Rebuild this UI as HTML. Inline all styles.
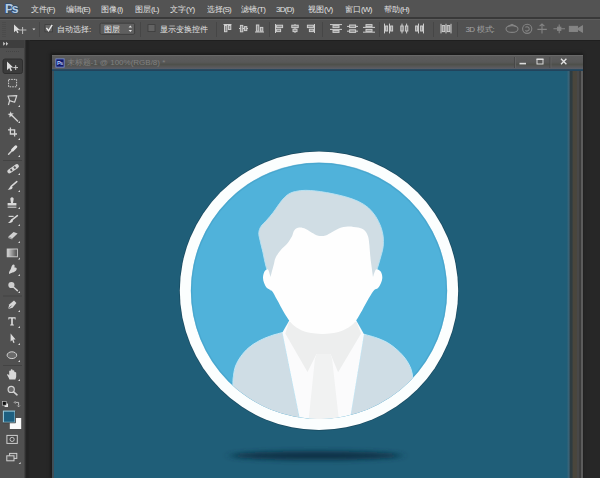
<!DOCTYPE html>
<html lang="zh">
<head>
<meta charset="utf-8">
<title>Photoshop</title>
<style>
html,body{margin:0;padding:0;}
body{width:600px;height:478px;overflow:hidden;background:#272727;position:relative;font-family:"Liberation Sans",sans-serif;font-size:9px;color:#d2d2d2;}
.abs{position:absolute;}
#menubar{left:0;top:0;width:600px;height:17.5px;background:#535353;}
#divider1{left:0;top:17.3px;width:600px;height:1.7px;background:#393939;}
#divider2{left:0;top:19px;width:600px;height:1px;background:#5d5d5d;}
#optbar{left:0;top:20px;width:600px;height:19.5px;background:#515151;}
#optshadow{left:0;top:39.5px;width:600px;height:1px;background:#1f1f1f;}
.mi{position:absolute;top:5px;height:10px;line-height:10px;white-space:nowrap;font-size:8px;color:#e2e2e2;}
.mi i,.ot i,.tt i{font-style:normal;letter-spacing:-0.7px;}
b.c{display:inline-block;font-weight:normal;white-space:nowrap;overflow:hidden;vertical-align:top;height:10px;}
.ot{position:absolute;top:25px;height:10px;line-height:10px;white-space:nowrap;font-size:8px;color:#e2e2e2;}
#toolbar{left:0;top:40px;width:25px;height:438px;background:#505050;}
#toolhead{left:0;top:40px;width:25px;height:7.5px;background:#3e3e3e;}
#toolborder{left:24px;top:40px;width:6px;height:438px;background:linear-gradient(90deg,#4c4c4c 0,#333 1.2px,#222 2.6px,#222 4px,#272727 6px);}
#win{left:52px;top:55px;width:531.3px;height:423px;background:#404e56;box-shadow:-1px -1px 2.5px 1px #1b1b1b;}
#titlebar{left:52px;top:55px;width:531px;height:15.5px;background:linear-gradient(#6e6e6e 0,#5b5b5b 1.5px,#585858 7px,#4e504b 9.5px,#565656 11.5px,#5a5e68 14px,#2a4a60 14.5px,#22445c 15.5px);}
#canvas{left:54px;top:70.5px;width:514.5px;height:407.5px;background:#1f5e78;}
#vscroll{left:567px;top:70.5px;width:16.3px;height:407.5px;background:linear-gradient(90deg,#1f5e78 0,#386378 1.2px,#386378 2.2px,#2e3c41 3px,#2e3c41 5px,#4a463c 6.2px,#4a463c 9.4px,#484848 10.2px,#484848 12px,#3c3c3c 12.6px,#3c3c3c 13.5px,#5c5c5c 14px,#5c5c5c 16.3px);}
</style>
</head>
<body>
<div id="menubar" class="abs"></div>
<div id="divider1" class="abs"></div>
<div id="divider2" class="abs"></div>
<div id="optbar" class="abs"></div>
<div id="optshadow" class="abs"></div>

<!-- menu -->
<svg class="abs" style="left:0;top:0" width="26" height="17" viewBox="0 0 26 17"><text x="5" y="13" font-family="Liberation Sans, sans-serif" font-weight="bold" font-size="12.8" fill="#b4cbe4" stroke="#2e4d70" stroke-width="1.6" paint-order="stroke" textLength="13.6">Ps</text></svg>
<span class="mi" style="left:30.5px"><b class="c" style="width:16px">文件</b><i>(F)</i></span>
<span class="mi" style="left:65.5px"><b class="c" style="width:16px">编辑</b><i>(E)</i></span>
<span class="mi" style="left:101px"><b class="c" style="width:16px">图像</b><i>(I)</i></span>
<span class="mi" style="left:135px"><b class="c" style="width:16px">图层</b><i>(L)</i></span>
<span class="mi" style="left:170px"><b class="c" style="width:16px">文字</b><i>(Y)</i></span>
<span class="mi" style="left:206.5px"><b class="c" style="width:16px">选择</b><i>(S)</i></span>
<span class="mi" style="left:241px"><b class="c" style="width:16px">滤镜</b><i>(T)</i></span>
<span class="mi" style="left:276px"><i>3D(D)</i></span>
<span class="mi" style="left:308px"><b class="c" style="width:16px">视图</b><i>(V)</i></span>
<span class="mi" style="left:345px"><b class="c" style="width:16px">窗口</b><i>(W)</i></span>
<span class="mi" style="left:384px"><b class="c" style="width:16px">帮助</b><i>(H)</i></span>

<!-- options bar -->
<svg class="abs" style="left:0;top:19px" width="600" height="21" viewBox="0 19 600 21" fill="none">
  <!-- grip -->
  <path d="M3 22V37M5 22V37" stroke="#464646" stroke-width="1" stroke-dasharray="1 1"/>
  <!-- move tool icon -->
  <path d="M14 24.6V32.2L16 30.4L17.4 33.2L18.6 32.6L17.3 29.9H19.9Z" fill="#dcdcdc"/>
  <path d="M18.6 30H26.4M22.6 27V34" stroke="#bdbdbd" stroke-width="1"/>
  <path d="M32.4 28.4H35.4L33.9 30.2Z" fill="#d8d8d8"/>
  <path d="M39.5 22V37" stroke="#464646" stroke-width="1"/>
  <!-- checkbox checked -->
  <rect x="45" y="24.6" width="7.4" height="7.2" fill="#666" stroke="#3d3d3d" stroke-width="0.8"/>
  <path d="M46.4 27.8L48.5 30.8L52.2 24.8" stroke="#ececec" stroke-width="1.4"/>
  <!-- dropdown -->
  <rect x="100" y="23.2" width="34.6" height="11.2" rx="1.5" fill="#5f5f5f" stroke="#3c3c3c" stroke-width="0.9"/>
  <path d="M128.6 27.6H132L130.3 25.6ZM128.6 30H132L130.3 32Z" fill="#e4e4e4"/>
  <path d="M140.5 22V37" stroke="#464646" stroke-width="1"/>
  <!-- checkbox unchecked -->
  <rect x="148" y="24.6" width="7" height="7" fill="#636363" stroke="#3d3d3d" stroke-width="0.8"/>
  <path d="M216.5 22V37" stroke="#464646" stroke-width="1"/>
  <!-- align icons -->
  <g stroke="#cdcdcd" stroke-width="1" fill="#8a8a8a">
    <path d="M223.5 24.5H231.5"/><rect x="224.5" y="25.5" width="2.4" height="6.2"/><rect x="228.4" y="25.5" width="2.4" height="4"/>
    <path d="M239 28.5H248"/><rect x="240.4" y="25.4" width="2.4" height="6.4"/><rect x="244.4" y="26.6" width="2.4" height="4"/>
    <path d="M255 32H264"/><rect x="256.4" y="25" width="2.4" height="6.2"/><rect x="260.4" y="27.4" width="2.4" height="3.8"/>
    <path d="M275.5 24V33"/><rect x="276.6" y="25.2" width="6" height="2.4"/><rect x="276.6" y="29.2" width="4" height="2.4"/>
    <path d="M295 24V33"/><rect x="291.8" y="25.2" width="6.4" height="2.4"/><rect x="293" y="29.2" width="4" height="2.4"/>
    <path d="M314.5 24V33"/><rect x="307.4" y="25.2" width="6" height="2.4"/><rect x="309.4" y="29.2" width="4" height="2.4"/>
    <path d="M330 24.6H342M330 29.4H342"/><rect x="333" y="25.6" width="6" height="2"/><rect x="333" y="30.4" width="6" height="2"/>
    <path d="M347 26.4H358M347 31.2H358"/><rect x="349.6" y="25" width="6" height="2.6"/><rect x="349.6" y="29.8" width="6" height="2.6"/>
    <path d="M363 27.4H375M363 32.2H375"/><rect x="366" y="24.6" width="6" height="2"/><rect x="366" y="29.4" width="6" height="2"/>
    <path d="M384.5 23.6V33.4M389.5 23.6V33.4"/><rect x="385.6" y="26" width="2" height="5"/><rect x="390.6" y="26" width="2" height="5"/>
    <path d="M402 23.6V33.4M406.6 23.6V33.4"/><rect x="400.8" y="26" width="2.4" height="5"/><rect x="405.4" y="26" width="2.4" height="5"/>
    <path d="M418.5 23.6V33.4M423.5 23.6V33.4"/><rect x="415.6" y="26" width="2" height="5"/><rect x="420.6" y="26" width="2" height="5"/>
    <path d="M441 23.8V33.4M446 23.8V33.4M451 23.8V33.4"/><rect x="442.2" y="25.6" width="2.6" height="6"/><rect x="447.2" y="25.6" width="2.6" height="6"/>
  </g>
  <path d="M269.5 22V37M322.5 22V37M379.5 22V37M433.5 22V37M457.5 22V37" stroke="#464646" stroke-width="1"/>
  <!-- 3D mode icons (dim) -->
  <g stroke="#848484" stroke-width="1.1" fill="none">
    <ellipse cx="512" cy="29" rx="6" ry="3.4"/><path d="M508 26.4L512 24.4L516 26.6"/>
    <circle cx="527.2" cy="28.8" r="4.6"/><path d="M525.4 27.4A2.2 2.2 0 1 1 525.4 30.4"/>
    <path d="M542 24V33.4M537.4 29.4H546.8M539.6 26.2L542 24L544.4 26.2"/>
    <path d="M553.4 28.8H565M559.2 24.4V33.2"/><rect x="557.6" y="27.2" width="3.2" height="3.2" fill="#848484"/>
    <rect x="569.4" y="26.4" width="8" height="5" fill="#848484"/><path d="M577.4 29L582.4 26V32Z" fill="#848484"/>
  </g>
</svg>
<span class="ot" style="left:57px"><b class="c" style="width:32px">自动选择</b><i>:</i></span>
<span class="ot" style="left:104px;color:#f0f0f0"><b class="c" style="width:16px">图层</b></span>
<span class="ot" style="left:159.5px"><b class="c" style="width:48px">显示变换控件</b></span>
<span class="ot" style="left:465.5px;color:#a4a4a4"><i>3D</i> <b class="c" style="width:16px">模式</b><i>:</i></span>

<!-- toolbar -->
<div id="toolbar" class="abs"></div>
<div id="toolhead" class="abs"></div>
<div id="toolborder" class="abs"></div>

<svg class="abs" style="left:0;top:40px" width="28" height="438" viewBox="0 40 28 438" fill="none" stroke="none">
  <defs><linearGradient id="gradtool" x1="0" x2="1" y1="0" y2="0"><stop offset="0" stop-color="#d8d8d8"/><stop offset="1" stop-color="#4a4a4a"/></linearGradient></defs>
  <!-- header chevrons -->
  <path d="M3.2 41.8L5.4 43.8L3.2 45.8ZM6 41.8L8.2 43.8L6 45.8Z" fill="#c8c8c8"/>
  <path d="M6 51.5H20" stroke="#444" stroke-width="1.2" stroke-dasharray="1 1"/>
  <!-- move (selected) -->
  <rect x="3" y="59" width="19.5" height="14.5" rx="2" fill="#3b3b3b" stroke="#2f2f2f" stroke-width="1"/>
  <path d="M7 61.6V70.2L9.2 68.1L10.7 71.2L12 70.6L10.6 67.6H13.3Z" fill="#dedede"/>
  <path d="M13.3 67.6H18M15.7 65.2V70" stroke="#d0d0d0" stroke-width="1"/>
  <!-- marquee -->
  <rect x="8.6" y="79.4" width="8" height="7.4" stroke="#cfcfcf" stroke-width="1" stroke-dasharray="1.6 1"/>
  <!-- lasso -->
  <path d="M8 96L16.8 95.6L14.6 102.2L9.6 100.6ZM9.6 100.6L8.4 105" stroke="#d4d4d4" stroke-width="1.2" stroke-linejoin="round"/>
  <!-- wand -->
  <path d="M10.7 111.2L11.5 113.4L13.8 113.2L12.2 114.8L13.4 116.9L11.1 116L9.4 117.6L9.6 115.2L7.6 114L9.9 113.6Z" fill="#d8d8d8"/>
  <path d="M12 115.6L18 121.6" stroke="#d0d0d0" stroke-width="1.4"/>
  <!-- crop -->
  <path d="M10.4 127.6V134H17M8 129.8H14.6V136.4" stroke="#d6d6d6" stroke-width="1.3"/>
  <!-- eyedropper -->
  <path d="M8.6 154.2L13.2 149.4" stroke="#d0d0d0" stroke-width="1.5" stroke-linecap="round"/>
  <path d="M12.6 150L15.8 146.8" stroke="#e0e0e0" stroke-width="3" stroke-linecap="round"/>
  <!-- healing brush -->
  <path d="M9.4 171.4L16.8 166.2" stroke="#d2d2d2" stroke-width="4.2" stroke-linecap="round"/>
  <path d="M10.5 170.6L12 169.5M14 168.2L15.6 167" stroke="#555" stroke-width="2.2"/>
  <!-- brush -->
  <path d="M16.8 181.6L11.2 186.4" stroke="#d8d8d8" stroke-width="1.5" stroke-linecap="round"/>
  <path d="M11.4 186C9.8 186.2 9.8 188.6 7.4 189.6C9.6 190 12.4 189.4 12.6 187.2Z" fill="#dcdcdc"/>
  <!-- stamp -->
  <path d="M10.4 199.6A1.7 1.7 0 1 1 13.6 199.6L13 203H16.4V205.6H7.6V203H11Z" fill="#d8d8d8"/>
  <path d="M7.6 207.2H16.4" stroke="#d0d0d0" stroke-width="1.1"/>
  <!-- history brush -->
  <path d="M17.4 215.6L11.6 220.2" stroke="#d8d8d8" stroke-width="1.5" stroke-linecap="round"/>
  <path d="M11.8 219.6C10 220 10.2 222 8 222.8C10.2 223.4 12.8 222.6 13 220.6Z" fill="#dcdcdc"/>
  <path d="M8.6 216.4H13.6" stroke="#d0d0d0" stroke-width="1.2"/>
  <!-- eraser -->
  <path d="M8.4 236.6L13.6 232L17.6 233.4L12.4 238.6Z" fill="#d0d0d0"/>
  <path d="M8.4 236.6L12.4 238.6L12.2 239.6L8.2 238Z" fill="#a8a8a8"/>
  <!-- gradient -->
  <rect x="7.2" y="249" width="10.2" height="7.8" fill="url(#gradtool)" stroke="#cfcfcf" stroke-width="0.9"/>
  <!-- smudge -->
  <path d="M9 274C8.6 271.2 10.4 270.4 11 268.4C11.4 266.6 12.2 264.6 13.8 264.6C15 264.8 14.6 266.6 14.4 267.6C15.8 267 17.2 267.8 16.6 269.6C16 271.6 14 272.2 12.4 272.6Z" fill="#d6d6d6"/>
  <!-- dodge -->
  <circle cx="11.4" cy="285" r="3.1" fill="#cfcfcf"/>
  <path d="M13.6 287.2L17.4 290.6" stroke="#d2d2d2" stroke-width="1.5" stroke-linecap="round"/>
  <!-- pen -->
  <path d="M8.2 309L9.2 304.4L14 300.6L16.4 303L12.6 307.8Z" fill="#d6d6d6"/>
  <path d="M8.4 308.8L11.6 305.6" stroke="#505050" stroke-width="0.8"/>
  <!-- type -->
  <path d="M8.4 317.2H15.6V319.4H14.8V318.4H12.8V324.6H13.8V325.6H10.2V324.6H11.2V318.4H9.2V319.4H8.4Z" fill="#e0e0e0"/>
  <!-- path select -->
  <path d="M10.6 333.6V341.6L12.2 340L13.4 343L14.6 342.4L13.4 339.6H15.6Z" fill="#dcdcdc"/>
  <!-- ellipse -->
  <ellipse cx="11.9" cy="355.2" rx="4.8" ry="3.4" fill="#6a6a6a" stroke="#d0d0d0" stroke-width="1"/>
  <!-- hand -->
  <path d="M9.4 379.4C8.8 377.4 7.6 376.2 7 374.6C7.6 373.8 8.6 374.4 9.2 375.4V371C9.8 370.2 10.6 370.4 10.8 371V369.8C11.4 369 12.4 369.2 12.6 369.8V370.6C13.2 369.8 14.2 370.2 14.4 371V372.2C15 371.6 16 372 16.2 372.8V376.4C16.2 377.6 15.6 378.4 15.4 379.4Z" fill="#d8d8d8"/>
  <!-- zoom -->
  <circle cx="11.2" cy="389.4" r="3.1" stroke="#d2d2d2" stroke-width="1.2" fill="#6a6a6a"/>
  <path d="M13.6 391.8L17 394.8" stroke="#d2d2d2" stroke-width="1.6" stroke-linecap="round"/>
  <!-- default / switch colours -->
  <rect x="4.6" y="403.6" width="3.4" height="3.4" fill="#e8e8e8"/>
  <rect x="2.6" y="401.6" width="3.6" height="3.6" fill="#111" stroke="#c8c8c8" stroke-width="0.6"/>
  <path d="M15.4 402.4H18.6V405.6M15.4 401.2L14.2 402.4L15.4 403.6M17.4 405.6L18.6 406.8L19.8 405.6" stroke="#c8c8c8" stroke-width="0.9"/>
  <!-- colour swatches -->
  <rect x="9.8" y="418" width="11.4" height="11" fill="#fafafa"/>
  <rect x="3.4" y="411.1" width="11.6" height="11.2" fill="#1d5f80" stroke="#9ccfe2" stroke-width="1"/>
  <path d="M2.9 422.8H15.5V410.6" stroke="#3a3a3a" stroke-width="0.8"/>
  <!-- quick mask -->
  <rect x="6.9" y="435.4" width="10.4" height="8" stroke="#d0d0d0" stroke-width="1" fill="#4a4a4a"/>
  <circle cx="12.1" cy="439.4" r="2.1" stroke="#d0d0d0" stroke-width="0.9"/>
  <!-- screen mode -->
  <rect x="9.6" y="453.4" width="7.2" height="5" stroke="#d0d0d0" stroke-width="1" fill="#5a5a5a"/>
  <rect x="6.8" y="455.8" width="7.2" height="5" stroke="#d0d0d0" stroke-width="1" fill="#5a5a5a"/>
  <!-- flyout markers -->
  <g fill="#d6d6d6">
    <path d="M18 89.6H20V87.6Z"/><path d="M18 107H20V105Z"/><path d="M18 123H20V121Z"/><path d="M18 140H20V138Z"/><path d="M18 157H20V155Z"/>
    <path d="M18 175H20V173Z"/><path d="M18 192H20V190Z"/><path d="M18 209H20V207Z"/><path d="M18 226H20V224Z"/><path d="M18 243H20V241Z"/><path d="M18 259.4H20V257.4Z"/>
    <path d="M18 276H20V274Z"/><path d="M18 293H20V291Z"/><path d="M18 312H20V310Z"/><path d="M18 328H20V326Z"/><path d="M18 345H20V343Z"/><path d="M18 362H20V360Z"/>
    <path d="M18 381H20V379Z"/><path d="M18.6 464H20.6V462Z"/>
  </g>
  <!-- separators -->
  <path d="M3 160.5H22M3 296H22M3 365.5H22" stroke="#434343" stroke-width="1"/>
</svg>

<!-- document window -->
<div id="win" class="abs"></div>
<div id="titlebar" class="abs"></div>
<svg class="abs" style="left:55px;top:58px" width="10" height="10" viewBox="0 0 10 10"><rect x="0.9" y="0.9" width="8.2" height="8.2" fill="#10186a" stroke="#7f98dc" stroke-width="0.8"/><text x="1.9" y="7.3" font-family="Liberation Sans, sans-serif" font-weight="bold" font-size="5.6" fill="#b4ccf6" textLength="6.2">Ps</text></svg>
<span class="abs tt" style="left:66.5px;top:58px;height:10px;line-height:10px;font-size:8px;color:#808080;white-space:nowrap"><b class="c" style="width:24px">未标题</b>-1 @ 100%(RGB/8) *</span>
<svg class="abs" style="left:510px;top:56px" width="72" height="13" viewBox="510 56 72 13" fill="none">
  <path d="M514.5 57V68M550 57V68" stroke="#474747" stroke-width="1"/>
  <path d="M515.5 57V68M551 57V68" stroke="#666" stroke-width="0.8"/>
  <path d="M519.5 63.6H526" stroke="#dcdcdc" stroke-width="1.6"/>
  <rect x="537" y="59.4" width="6" height="4.6" stroke="#d8d8d8" stroke-width="1"/><path d="M536.5 59.2H543.5" stroke="#e0e0e0" stroke-width="1.4"/>
  <path d="M561 58.8L566.4 64.2M566.4 58.8L561 64.2" stroke="#e4e4e4" stroke-width="1.3"/>
</svg>
<div id="canvas" class="abs"></div>
<div id="vscroll" class="abs"></div>

<!-- artwork -->
<svg class="abs" style="left:54.5px;top:70px" width="516" height="408" viewBox="54.5 70 516 408">
  <defs>
    <filter id="blur" x="-20%" y="-300%" width="140%" height="700%"><feGaussianBlur stdDeviation="5 2.4"/></filter>
    <clipPath id="inner"><circle cx="318.5" cy="290.8" r="128.1"/></clipPath>
  </defs>
  <ellipse cx="315.5" cy="455.6" rx="86" ry="4.4" fill="#0e3346" filter="url(#blur)"/>
  <circle cx="318.5" cy="290.8" r="139.9" fill="#19495f"/>
  <circle cx="318.5" cy="290.8" r="139.2" fill="#fbfefe"/>
  <circle cx="318.5" cy="290.8" r="128.1" fill="#50b2da"/>
  <circle cx="318.5" cy="290.8" r="127.5" fill="none" stroke="#3f9cc4" stroke-opacity="0.5" stroke-width="1.4"/>
  <g clip-path="url(#inner)">
    <path d="M281.9 332.5C279.9 333.1 274.1 334.5 270.2 335.9C266.3 337.3 262.1 338.9 258.5 340.9C254.9 342.8 251.5 345.0 248.4 347.6C245.3 350.2 242.3 353.7 240.1 356.8C237.9 359.9 236.3 362.9 235.1 366.0C233.9 369.1 233.5 372.0 233.1 375.2C232.7 378.4 232.5 376.7 232.4 385.0C232.3 393.3 232.4 418.3 232.4 425.0C243.8 425.0 289.1 425.0 300.5 425.0C297.4 409.6 285.0 347.9 281.9 332.5Z" fill="#cfdde5" stroke="#bfe6f6" stroke-width="1"/>
    <path d="M363.5 334.2C365.4 334.8 371.3 336.2 375.2 337.6C379.1 339.0 383.3 340.5 386.9 342.6C390.5 344.7 393.8 347.3 396.9 350.1C400.0 352.9 403.1 356.2 405.3 359.3C407.5 362.4 409.2 365.6 410.3 368.5C411.4 371.4 411.8 374.1 412.2 377.0C412.6 379.9 412.7 378.0 412.8 386.0C412.9 394.0 412.8 418.5 412.8 425.0C402.1 425.0 359.2 425.0 348.5 425.0C351.0 409.9 361.0 349.3 363.5 334.2Z" fill="#cfdde5" stroke="#bfe6f6" stroke-width="1"/>
    <path d="M289 320L281.9 332.5L300.5 425L348.5 425L363.5 334.2L355.5 320Z" fill="#fbfbfc"/>
    <path d="M288.5 322L284.8 333.5L307 372L316 354L330 354L337.6 372.2L360.6 333.5L356 322Z" fill="#edeeee"/>
    <path d="M316 354L330 354L331.6 359L339 425L307.6 425L314.4 359Z" fill="#f1f2f2"/>
    <path d="M269.5 277.0C268.8 275.2 266.7 270.6 265.5 266.5C264.3 262.4 263.5 257.1 262.5 252.7C261.5 248.3 260.2 243.5 259.5 240.2C258.8 236.9 258.1 235.0 258.3 232.7C258.5 230.4 259.2 228.5 260.5 226.4C261.8 224.3 264.3 222.4 266.3 220.1C268.3 217.8 270.5 215.3 272.6 212.6C274.7 209.9 276.9 206.3 278.8 203.8C280.7 201.3 282.0 199.4 283.9 197.6C285.8 195.8 287.4 194.2 290.1 193.0C292.8 191.8 296.9 191.0 300.2 190.6C303.5 190.2 306.7 190.3 310.0 190.5C313.3 190.7 316.2 191.0 320.0 191.6C323.8 192.2 328.3 192.9 332.5 193.8C336.7 194.7 340.9 195.6 345.1 196.8C349.3 198.1 353.9 199.5 357.6 201.3C361.4 203.1 364.7 205.1 367.6 207.6C370.5 210.1 373.1 213.3 375.2 216.4C377.3 219.5 378.9 223.1 380.2 226.4C381.4 229.7 382.3 233.1 382.7 236.4C383.1 239.8 383.0 243.4 382.7 246.5C382.4 249.6 381.4 252.3 380.7 255.2C379.9 258.1 379.0 261.3 378.2 264.0C377.4 266.7 376.6 269.3 375.7 271.5C374.8 273.7 373.4 276.1 373.0 277.0C373.0 279.2 373.0 287.8 373.0 290.0C355.8 290.0 286.8 290.0 269.5 290.0C269.5 287.8 269.5 279.2 269.5 277.0Z" fill="#d0dde4" stroke="#b9e2f3" stroke-width="0.9"/>
    <path d="M270.0 277.0C270.5 275.1 272.2 268.5 273.1 265.3C274.0 262.1 273.9 260.2 275.1 257.7C276.3 255.2 278.2 252.5 280.1 250.2C282.0 247.9 284.5 246.3 286.4 244.0C288.3 241.7 290.1 238.7 291.4 236.4C292.6 234.1 292.6 231.7 293.9 230.2C295.1 228.7 297.0 227.8 298.9 227.6C300.8 227.4 303.1 228.1 305.2 228.9C307.3 229.8 309.3 231.6 311.4 232.7C313.5 233.8 315.4 235.2 317.7 235.7C320.0 236.2 322.7 236.1 325.0 235.5C327.3 234.9 329.0 233.4 331.3 232.2C333.6 231.0 336.1 229.2 338.8 228.2C341.5 227.2 344.5 226.5 347.6 226.4C350.7 226.3 354.9 227.0 357.6 227.6C360.3 228.2 362.2 228.7 363.9 230.2C365.6 231.7 366.8 233.9 367.6 236.4C368.4 238.9 368.5 242.1 368.9 245.2C369.2 248.3 369.4 251.8 369.7 255.2C370.0 258.6 370.4 261.7 370.9 265.3C371.4 268.9 372.2 275.1 372.5 277.0C373.0 275.8 374.2 270.4 375.5 269.5C376.8 268.6 379.1 270.2 380.2 271.5C381.2 272.8 381.8 275.4 381.8 277.3C381.9 279.2 381.2 281.2 380.5 283.0C379.8 284.8 378.7 286.7 377.5 288.0C376.3 289.3 374.9 288.6 373.1 290.8C371.3 293.0 368.8 297.5 366.6 301.2C364.4 304.9 362.1 309.7 360.1 313.1C358.1 316.5 356.7 319.4 354.7 321.8C352.7 324.2 350.4 325.9 348.0 327.5C345.6 329.1 343.0 330.2 340.2 331.2C337.4 332.2 334.0 332.9 331.0 333.3C328.0 333.8 325.0 333.9 322.0 333.9C319.0 333.9 316.1 333.8 313.0 333.3C309.9 332.9 306.2 332.2 303.4 331.2C300.6 330.2 298.3 329.1 296.0 327.5C293.7 325.9 291.8 324.4 289.7 321.8C287.6 319.2 285.4 315.6 283.2 312.0C281.0 308.4 278.7 303.6 276.7 300.1C274.7 296.6 273.0 292.8 271.3 290.8C269.6 288.8 267.8 289.3 266.5 288.0C265.2 286.7 264.3 284.8 263.6 283.0C262.9 281.2 262.4 279.2 262.5 277.3C262.6 275.4 263.2 272.8 264.0 271.5C264.8 270.2 266.5 268.6 267.5 269.5C268.5 270.4 269.6 275.8 270.0 277.0Z" fill="#fefefe"/>
  </g>
</svg>
</body>
</html>
